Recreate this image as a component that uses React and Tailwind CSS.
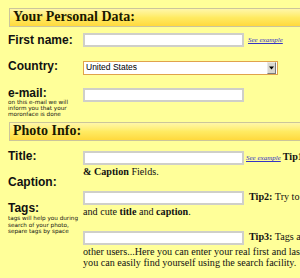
// Photo upload form: personal data and photo info sections with tips.
const labelCls = "font-['Liberation_Sans',Arial,sans-serif] text-[12px] font-bold leading-[14px] text-[#111]";
const noteCls = "font-['DejaVu_Sans',Verdana,sans-serif] text-[5.7px] text-[#111]";
const serifCls = "font-['Liberation_Serif','Times_New_Roman',serif] text-[10.15px] text-[#111] whitespace-nowrap";

function SectionHead({ title }) {
  return (
    <div className="ml-[9px] h-[19px] border-y border-l border-[#cbc59b] bg-linear-to-b from-[#fff7a8] via-[#ffeb62] to-[#ffd93c] pl-[3px]">
      <h2 className="font-['Liberation_Serif','Times_New_Roman',serif] text-[14px] font-bold leading-[15px] text-[#1a1800]">
        {title}
      </h2>
    </div>
  );
}

function Field() {
  return (
    <input
      type="text"
      readOnly
      className="block h-[14px] w-[161px] shrink-0 border-2 border-[#cfcfc9] bg-white outline-none"
    />
  );
}

function SeeExample({ className = "" }) {
  return (
    <a className={`shrink-0 font-['Liberation_Serif',serif] text-[7px] italic leading-[14px] text-[#3535c4] underline ${className}`}>
      See example
    </a>
  );
}

export default function App() {
  return (
    <div className="h-[278px] w-[300px] overflow-hidden bg-[#ffff99] pt-[8px]">
      <SectionHead title="Your Personal Data:" />

      <div className="mt-[6px] grid h-[26px] grid-cols-[83px_1fr]">
        <div className={`pl-[8px] ${labelCls}`}>First name:</div>
        <div className="flex items-start">
          <Field />
          <SeeExample className="ml-[4px]" />
        </div>
      </div>

      <div className="grid h-[27px] grid-cols-[83px_1fr]">
        <div className={`pl-[8px] ${labelCls}`}>Country:</div>
        <div>
          <div className="mt-[2px] flex h-[14px] w-[195px] items-start border border-[#e0a24c] bg-white pl-[2px]">
            <span className="flex-1 font-['Liberation_Sans',Arial,sans-serif] text-[8.5px] leading-[11px] text-black">
              United States
            </span>
            <span className="mr-[1px] flex h-[12px] w-[9px] items-center justify-center border border-t-[#e8e8e8] border-l-[#e8e8e8] border-r-[#7a7a7a] border-b-[#7a7a7a] bg-[#d9d7cf]">
              <svg width="5" height="4" viewBox="0 0 5 4">
                <path d="M0 0.5h5L2.5 3.5z" fill="#000" />
              </svg>
            </span>
          </div>
        </div>
      </div>

      <div className="grid h-[36px] grid-cols-[83px_1fr]">
        <div className="pl-[8px]">
          <div className={labelCls}>e-mail:</div>
          <p className={`-mt-[1px] leading-[6px] ${noteCls}`}>
            on this e-mail we will
            <br />
            inform you that your
            <br />
            moronface is done
          </p>
        </div>
        <div className="pt-[2px]">
          <Field />
        </div>
      </div>

      <SectionHead title="Photo Info:" />

      <div className="flex">
        <div className="w-[83px] shrink-0 pl-[8px] pt-[8px]">
          <div className={`h-[26px] ${labelCls}`}>Title:</div>
          <div className={`h-[26px] ${labelCls}`}>Caption:</div>
          <div className={labelCls}>Tags:</div>
          <p className={`leading-[6.5px] ${noteCls}`}>
            tags will help you during
            <br />
            search of your photo,
            <br />
            separe tags by space
          </p>
        </div>

        <div className="min-w-0 flex-1 pt-[10px]">
          <div className="flex h-[14px] items-start">
            <Field />
            <SeeExample className="ml-[2px]" />
            <span className={`ml-[2px] leading-[12px] ${serifCls}`}>
              <b>Tip1:</b> Don't forget the <b>Title</b>
            </span>
          </div>
          <div className={`mt-[1px] leading-[11px] ${serifCls}`}>
            <b>&amp; Caption</b> Fields.
          </div>

          <div className="mt-[14px] flex h-[14px] items-start">
            <Field />
            <span className={`ml-[5px] leading-[12px] ${serifCls}`}>
              <b>Tip2:</b> Try to give your photo a short
            </span>
          </div>
          <div className={`mt-[1px] leading-[11px] ${serifCls}`}>
            and cute <b>title</b> and <b>caption</b>.
          </div>

          <div className="mt-[14px] flex h-[14px] items-start">
            <Field />
            <span className={`ml-[5px] leading-[12px] ${serifCls}`}>
              <b>Tip3:</b> Tags are words that help
            </span>
          </div>
          <div className={`mt-[1px] leading-[11px] ${serifCls}`}>
            other users...Here you can enter your real first and last name so
            <br />
            you can easily find yourself using the search facility.
          </div>
        </div>
      </div>
    </div>
  );
}
